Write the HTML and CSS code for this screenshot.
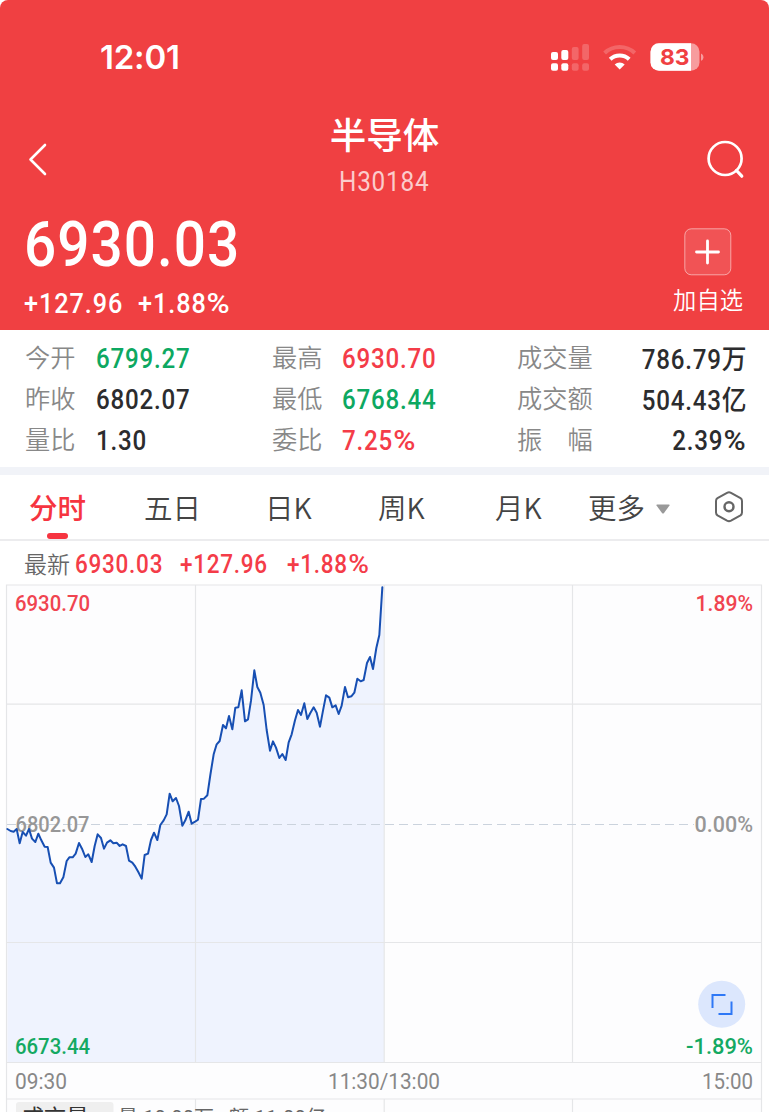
FILE: index.html
```html
<!DOCTYPE html>
<html lang="zh-CN">
<head>
<meta charset="utf-8">
<title>半导体 H30184</title>
<link rel="stylesheet" href="styles.css">
</head>
<body>
<div class="screen">
  <header class="hero">
    <div class="status">
      <span class="clock">12:01</span>
      <svg class="status-icons" width="154" height="30" viewBox="550 42 154 30">
        <g fill="#fff">
          <rect x="551" y="52" width="7" height="8" rx="2"/><rect x="551" y="63.3" width="7" height="7.4" rx="2"/>
          <rect x="561.3" y="50" width="7" height="10" rx="2"/><rect x="561.3" y="63.3" width="7" height="7.4" rx="2"/>
          <g opacity=".2">
            <rect x="571.8" y="47" width="6.8" height="13" rx="2"/><rect x="571.8" y="63.3" width="6.8" height="7.4" rx="2"/>
            <rect x="582.2" y="44" width="6.8" height="16" rx="2"/><rect x="582.2" y="63.3" width="6.8" height="7.4" rx="2"/>
          </g>
          <path d="M619.7 69.6l-5-5.1a7.3 7.3 0 0 1 10 0z"/>
        </g>
        <g fill="none" stroke="#fff">
          <path d="M610.2 59.2a13.8 13.8 0 0 1 19 0" stroke-width="4"/>
          <path d="M604.6 53a22 22 0 0 1 30.2 0" stroke-width="4" opacity=".2"/>
        </g>
        <rect x="650.5" y="43.3" width="49" height="27.5" rx="8.5" fill="#f79c9e"/>
        <path d="M691 43.3h-32a8.5 8.5 0 0 0-8.5 8.5V62.300a8.500 8.500 0 0 0 8.500 8.500h32z" fill="#fff"/>
        <path d="M701 53.500c3.200 1.300 3.200 6 0 7.300z" fill="#f79c9e"/>
        <text x="660" y="65" textLength="29.500" lengthAdjust="spacingAndGlyphs" class="battery">83</text>
      </svg>
    </div>
    <div class="titlebar">
      <svg class="back" width="22" height="36" viewBox="0 0 22 36"><path d="M18 4L3.500 18.500 18 33" fill="none" stroke="#fff" stroke-width="2.600" stroke-linecap="round" stroke-linejoin="round"/></svg>
      <div class="titles"><h1>半导体</h1><p><span class="num">H30184</span></p></div>
      <svg class="search" width="40" height="42" viewBox="705 138 40 42" fill="none" stroke="#fff"><circle cx="725.100" cy="158.500" r="16.500" stroke-width="2.700"/><path d="M736.500 170.500l5.300 5.700" stroke-width="3.200" stroke-linecap="round"/></svg>
    </div>
    <div class="quote">
      <div>
        <div class="price"><span class="num">6930.03</span></div>
        <div class="change"><span class="num first">+127.96</span><span class="num">+1.88<em>%</em></span></div>
      </div>
      <div class="watch">
        <svg width="48" height="48" viewBox="0 0 48 48"><rect x=".8" y=".8" width="46" height="46" rx="6.500" fill="#fff" fill-opacity=".1" stroke="#fff" stroke-opacity=".5"/><path d="M12.500 24H34.500M23.500 13V35" stroke="#fff" stroke-width="2.800" stroke-linecap="round"/></svg>
        <span>加自选</span>
      </div>
    </div>
  </header>

  <section class="stats">
    <span>今开</span><b class="num green">6799.27</b><span>最高</span><b class="num red">6930.70</b><span>成交量</span><b class="num end">786.79<i>万</i></b>
    <span>昨收</span><b class="num">6802.07</b><span>最低</span><b class="num green">6768.44</b><span>成交额</span><b class="num end">504.43<i>亿</i></b>
    <span>量比</span><b class="num">1.30</b><span>委比</span><b class="num red">7.25<em>%</em></b><span>振　幅</span><b class="num end">2.39<em>%</em></b>
  </section>

  <nav class="tabs">
    <span class="active">分时</span><span>五日</span><span>日K</span><span>周K</span><span>月K</span>
    <span class="more">更多<svg width="14" height="10" viewBox="0 0 14 10"><path d="M1 .5H13Q14 .5 13.500 1.500L8 9Q7 10 6 9L.5 1.500Q0 .5 1 .5Z" fill="#999"/></svg></span>
    <svg class="gear" width="30" height="32" viewBox="0 0 30 32" fill="none" stroke="#666" stroke-width="2" stroke-linejoin="round"><path d="M13 1.800Q15 .8 17 1.800L26.500 7.200Q28 8.200 28 10V21.500Q28 23.300 26.500 24.300L17 29.700Q15 30.700 13 29.700L3.500 24.300Q2 23.300 2 21.500V10Q2 8.200 3.500 7.200Z"/><circle cx="15" cy="15.800" r="4.500" stroke-width="2.400"/></svg>
  </nav>

  <div class="latest"><span>最新</span><b class="num">6930.03</b><b class="num">+127.96</b><b class="num">+1.88<em>%</em></b></div>

  <svg class="chart" width="769" height="528" viewBox="0 584 769 528">
    <rect x="6.500" y="585" width="755" height="540" fill="#fdfdfe"/>
    <g transform="translate(0 580) scale(.33333)">
      <path fill="#eff3fe" d="M22 747L32 753 41 755 50 747 59 790 68 756 78 767 87 747 96 776 106 786 115 761 124 781 134 800 143 801 152 848 162 863 171 910 180 910 190 892 200 843 208 832 218 832 227 821 237 789 246 806 256 831 265 823 275 846 284 798 293 763 303 774 312 806 321 788 331 781 340 790 350 788 359 798 368 793 378 798 387 842 397 848 406 860 415 876 425 896 434 825 444 821 453 780 462 758 472 780 481 735 491 721 500 703 509 641 518 664 528 654 537 678 547 737 556 721 566 695 575 731 584 726 594 719 603 657 612 656 622 646 631 585 641 523 650 493 659 483 669 435 678 445 687 408 697 448 706 383 715 382 725 331 735 424 744 418 753 362 763 271 772 321 781 338 791 375 800 450 810 512 819 484 828 503 838 534 847 522 857 540 866 487 875 463 885 421 894 390 903 405 913 370 922 417 931 399 941 382 950 398 960 440 969 392 978 346 988 353 997 382 1007 376 1016 402 1025 377 1035 321 1044 352 1054 349 1063 338 1072 296 1082 304 1091 300 1101 249 1110 231 1119 267 1129 204 1138 165 1147 20L1152 20V1447H22Z"/>
    </g>
    <g fill="none" stroke="#e5e6e8" stroke-width="1.200">
      <path d="M6.500 1112V585H761.500V1112M6.500 704.200H761.500M6.500 942.500H761.500M6.500 1062.500H761.500M6.500 1099H761.500"/>
      <path d="M195.500 585V1062M384.200 585V1062M572.500 585V1062M195.500 1099V1112M384.200 1099V1112M572.500 1099V1112"/>
    </g>
    <path d="M7 824.500H694" stroke="#cbd3dd" stroke-width="1.200" stroke-dasharray="9 5"/>
    <text class="axis gray" x="15.500" y="832.300" textLength="74" lengthAdjust="spacingAndGlyphs">6802.07</text>
    <g transform="translate(0 580) scale(.33333)">
      <path fill="none" stroke="#174fb3" stroke-width="6" stroke-linejoin="round" stroke-linecap="round" d="M22 747L32 753 41 755 50 747 59 790 68 756 78 767 87 747 96 776 106 786 115 761 124 781 134 800 143 801 152 848 162 863 171 910 180 910 190 892 200 843 208 832 218 832 227 821 237 789 246 806 256 831 265 823 275 846 284 798 293 763 303 774 312 806 321 788 331 781 340 790 350 788 359 798 368 793 378 798 387 842 397 848 406 860 415 876 425 896 434 825 444 821 453 780 462 758 472 780 481 735 491 721 500 703 509 641 518 664 528 654 537 678 547 737 556 721 566 695 575 731 584 726 594 719 603 657 612 656 622 646 631 585 641 523 650 493 659 483 669 435 678 445 687 408 697 448 706 383 715 382 725 331 735 424 744 418 753 362 763 271 772 321 781 338 791 375 800 450 810 512 819 484 828 503 838 534 847 522 857 540 866 487 875 463 885 421 894 390 903 405 913 370 922 417 931 399 941 382 950 398 960 440 969 392 978 346 988 353 997 382 1007 376 1016 402 1025 377 1035 321 1044 352 1054 349 1063 338 1072 296 1082 304 1091 300 1101 249 1110 231 1119 267 1129 204 1138 165 1147 22"/>
    </g>
    <g class="axis">
      <text class="red" x="15" y="610.500" textLength="75" lengthAdjust="spacingAndGlyphs">6930.70</text>
      <text class="red" x="695.500" y="610.500" textLength="57.500" lengthAdjust="spacingAndGlyphs">1.89%</text>
      <text class="gray" x="694.500" y="832.300" textLength="58.500" lengthAdjust="spacingAndGlyphs">0.00%</text>
      <text class="green" x="15" y="1054" textLength="75" lengthAdjust="spacingAndGlyphs">6673.44</text>
      <text class="green" x="686" y="1054" textLength="67" lengthAdjust="spacingAndGlyphs">-1.89%</text>
      <text class="time" x="15" y="1089.300" textLength="52" lengthAdjust="spacingAndGlyphs">09:30</text>
      <text class="time" x="328" y="1089.300" textLength="112" lengthAdjust="spacingAndGlyphs">11:30/13:00</text>
      <text class="time" x="702" y="1089.300" textLength="51" lengthAdjust="spacingAndGlyphs">15:00</text>
    </g>
    <circle cx="721.700" cy="1004.300" r="23.500" fill="#dce7fd"/>
    <path d="M725.500 995H712.500V1008M718.500 1014H731.500V1001.500" fill="none" stroke="#2e78f6" stroke-width="2"/>
    <rect x="16" y="1102" width="97.500" height="20" rx="3" fill="#efefef"/>
    <g class="volume">
      <text class="dark" x="21" y="1125.500" textLength="68">成交量</text>
      <text x="118" y="1124.500" textLength="96">量 10.00万</text>
      <text x="229" y="1124.500" textLength="97">额 11.00亿</text>
    </g>
  </svg>
</div>
</body>
</html>
```
FILE: styles.css
```css
* { box-sizing: border-box; }
body { margin: 0; background: #fff; font-family: "Noto Sans CJK SC", sans-serif; }
h1, p { margin: 0; }
.screen { width: 769px; height: 1112px; overflow: hidden; display: flex; flex-direction: column; background: #fff; }
.num {
  display: inline-block;
  font-family: Roboto, "Noto Sans CJK SC", sans-serif;
  font-weight: 500;
  letter-spacing: .033em;
  white-space: nowrap;
  transform: scaleX(.9);
  transform-origin: left center;
}
.num em { display: inline-block; font-style: normal; letter-spacing: 0; transform: scaleX(1.25); transform-origin: left center; margin-right: .2em; }
.red { color: #f43c48; fill: #f04450; }
.green { color: #0da861; fill: #14a962; }
.gray { fill: #979797; }

.hero { height: 330px; flex: none; background: #f04042; color: #fff; border-radius: 8px 8px 0 0; }
.status { height: 106px; padding: 42px 65px 0 100px; display: flex; justify-content: space-between; }
.clock { font: 600 33px/31px Inter, sans-serif; letter-spacing: -.2px; }
.battery { font: 700 22px Inter, sans-serif; fill: #f04042; }
.titlebar { height: 98px; padding: 0 24px 0 27px; display: grid; grid-template-columns: 140px 1fr 143px; }
.back { margin-top: 35px; }
.search { margin-top: 32px; justify-self: end; }
.titles { text-align: center; }
.titles h1 { font-size: 36.500px; line-height: 56px; font-weight: 500; }
.titles p { font-size: 27px; line-height: 36px; color: #fbcccc; }
.titles .num { font-weight: 400; transform-origin: center; }
.quote { display: flex; justify-content: space-between; padding: 0 26px 0 24px; }
.price { font-size: 63px; line-height: 70px; }
.price .num { letter-spacing: .018em; }
.change { margin-top: 8px; font-size: 28px; line-height: 32px; display: flex; }
.change .num { letter-spacing: .038em; }
.change .first { width: 114px; }
.watch { display: flex; flex-direction: column; align-items: center; padding-top: 24px; }
.watch span { margin-top: 7px; font-size: 23.300px; line-height: 32px; font-weight: 350; }

.stats { height: 137px; flex: none; padding: 8px 23px 0 25px; display: grid; grid-template-columns: 71px 176px 70px 175px 100px 1fr; grid-template-rows: repeat(3, 41px); align-items: center; color: #2c2c2e; }
.stats > span { font-size: 25.200px; line-height: 40px; font-weight: 350; color: #888; white-space: nowrap; margin-top: -5px; }
.stats .num { font-size: 26.800px; line-height: 41px; margin-top: 2px; }
.stats .end { justify-self: end; transform-origin: right center; }
.num i { font-style: normal; font-size: 27.500px; letter-spacing: 0; }

.tabs { height: 74px; flex: none; border-top: 8px solid #f1f3f8; border-bottom: 2px solid #ececee; padding-left: 29px; display: grid; grid-template-columns: 115px 121px 113px 117px 93px 126px 30px; font-size: 28.500px; line-height: 63px; font-weight: 350; color: #444; }
.tabs .active { font-weight: 500; color: #f63440; position: relative; width: 57px; }
.tabs .active::after { content: ""; position: absolute; left: 18px; bottom: 0; width: 21px; height: 6px; border-radius: 3px; background: #f63440; }
.more svg { margin-left: 11px; vertical-align: 5px; }
.gear { align-self: center; }

.latest { height: 43px; flex: none; padding-left: 24px; display: grid; grid-template-columns: 51px 105px 107px 1fr; align-items: center; color: #f43c48; }
.latest span { color: #666; font-size: 23px; font-weight: 350; line-height: 40px; margin-top: -1px; }
.latest .num { font-size: 25px; line-height: 40px; margin-top: 4px; }

.chart { display: block; flex: none; }
.axis { font: 500 22px Roboto, sans-serif; }
.time { fill: #888; font-weight: 400; }
.volume { font: 400 20px Roboto, "Noto Sans CJK SC", sans-serif; fill: #666; }
.volume .dark { font-size: 23px; fill: #333; }
```
